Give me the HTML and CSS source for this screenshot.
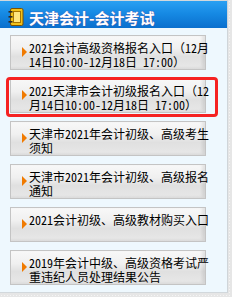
FILE: index.html
```html
<!DOCTYPE html>
<html lang="zh-CN">
<head>
<meta charset="utf-8">
<title>天津会计-会计考试</title>
<link rel="stylesheet" href="styles.css">
</head>
<body>
<div class="panel">
  <div class="panel-head">
    <svg class="head-icon" width="16" height="18" viewBox="0 0 16 18" aria-hidden="true">
      <rect x="2.5" y="0.5" width="12.5" height="17" rx="1.5" fill="#f2c21a" stroke="#7a5000"/>
      <rect x="5.5" y="3.5" width="7" height="11" fill="#ffe680" stroke="#a87400"/>
      <rect x="0.5" y="3" width="4" height="1.6" fill="#2a2a2a"/>
      <rect x="0.5" y="8" width="4" height="1.6" fill="#2a2a2a"/>
      <rect x="0.5" y="13" width="4" height="1.6" fill="#2a2a2a"/>
    </svg>
    <h2 class="head-title">天津会计-会计考试</h2>
  </div>
  <ul class="links">
    <li class="link-item"><a class="link" href="#"><span class="arrow"></span><span class="link-text">2021会计高级资格报名入口（12月14日10:00-12月18日 17:00）</span></a></li>
    <li class="link-item"><a class="link" href="#"><span class="arrow"></span><span class="link-text">2021天津市会计初级报名入口（12月14日10:00-12月18日 17:00）</span></a><span class="mark"></span></li>
    <li class="link-item"><a class="link" href="#"><span class="arrow"></span><span class="link-text">天津市2021年会计初级、高级考生须知</span></a></li>
    <li class="link-item"><a class="link" href="#"><span class="arrow"></span><span class="link-text">天津市2021年会计初级、高级报名通知</span></a></li>
    <li class="link-item"><a class="link" href="#"><span class="arrow"></span><span class="link-text">2021会计初级、高级教材购买入口</span></a></li>
    <li class="link-item"><a class="link" href="#"><span class="arrow"></span><span class="link-text">2019年会计中级、高级资格考试严重违纪人员处理结果公告</span></a></li>
  </ul>
</div>
</body>
</html>
```
FILE: styles.css
```css
html, body {
  margin: 0;
  padding: 0;
}
body {
  width: 232px;
  height: 297px;
  overflow: hidden;
  background-color: #e6e6e6;
  background-image: radial-gradient(circle, #f4f4f4 0.8px, transparent 1px);
  background-size: 3px 3px;
  font-family: "Noto Sans Mono CJK SC", "Noto Sans CJK SC", sans-serif;
}
.panel {
  width: 227px;
  background: #eef8fe;
  border-top: 1px solid #d2d8dc;
  border-right: 1px solid #cfd5d9;
  border-bottom: 1px solid #d2d8dc;
}
.panel-head {
  height: 27px;
  display: flex;
  align-items: flex-start;
  padding-left: 8px;
  background: linear-gradient(to bottom, #2aa0f2 0%, #168ae4 45%, #0a6fcd 100%);
}
.head-icon {
  display: block;
  margin-top: 7px;
  flex-shrink: 0;
}
.head-title {
  margin: 0 0 0 5px;
  padding-top: 8px;
  font-family: "Noto Sans CJK SC", sans-serif;
  font-size: 15px;
  line-height: 18px;
  font-weight: bold;
  color: #fff;
  text-shadow: 0 0 1px #7a3c8c;
  white-space: nowrap;
}
.links {
  list-style: none;
  margin: 0;
  padding: 7px 0 7px 0;
}
.link-item {
  position: relative;
  margin: 0 0 8px 10px;
  width: 196px;
}
.link-item:last-child {
  margin-bottom: 0;
}
.link {
  box-sizing: border-box;
  display: flex;
  align-items: flex-start;
  height: 35px;
  border: 1px solid #c4c4c4;
  background: linear-gradient(to bottom, #f8f8f8 0%, #f0f0f0 38%, #e0e0e0 62%, #e8e8e8 100%);
  box-shadow: inset -3px -1px 3px rgba(0, 0, 0, 0.08);
  color: #000;
  text-decoration: none;
}
.arrow {
  flex-shrink: 0;
  width: 0;
  height: 0;
  margin: 11px 0 0 11px;
  border-top: 5px solid transparent;
  border-bottom: 5px solid transparent;
  border-left: 5px solid #f07a00;
}
.link-text {
  flex-shrink: 0;
  width: 186px;
  margin: 5px 0 0 2px;
  font-size: 12px;
  line-height: 14px;
}
.mark {
  position: absolute;
  top: -1px;
  left: -4px;
  width: 212px;
  height: 40px;
  box-sizing: border-box;
  border: 3px solid #f52222;
  border-radius: 4px;
  pointer-events: none;
}
```
